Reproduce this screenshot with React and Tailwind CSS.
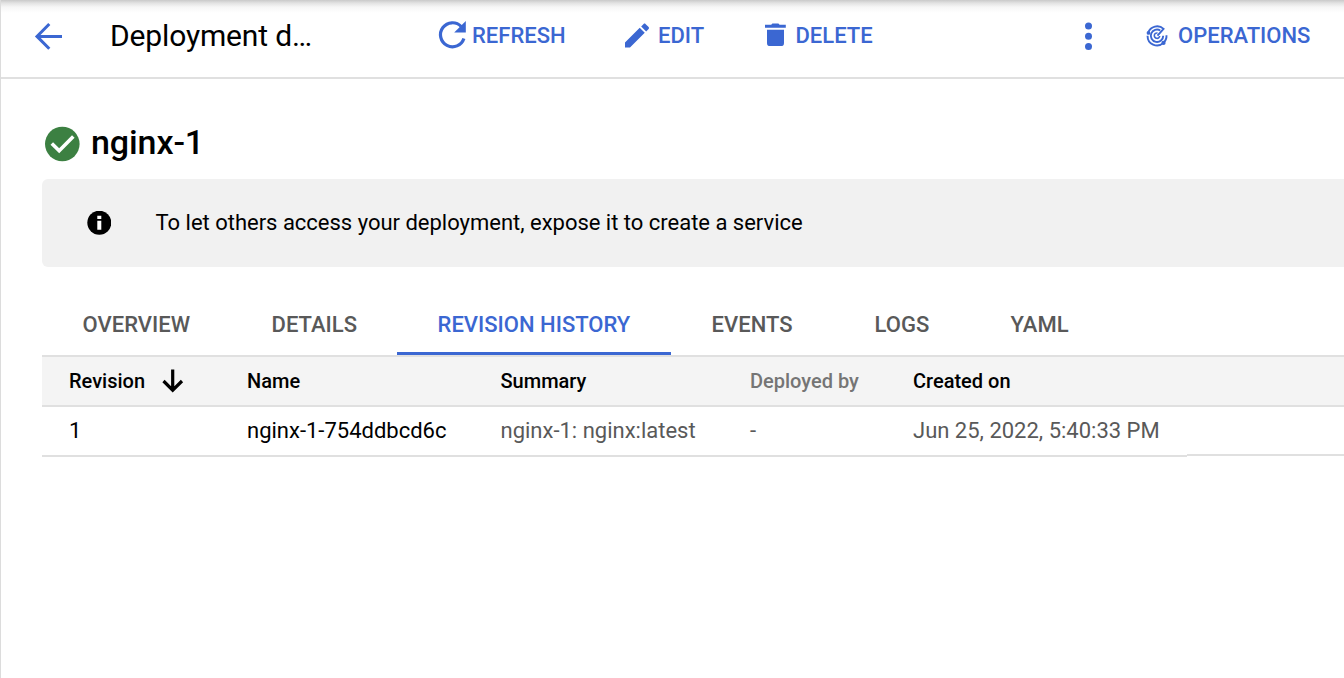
import React from "react";

const tabs = [
  { label: "OVERVIEW", w: "w-[189px]" },
  { label: "DETAILS", w: "w-[166px]" },
  { label: "REVISION HISTORY", w: "w-[274px]", active: true },
  { label: "EVENTS", w: "w-[163px]" },
  { label: "LOGS", w: "w-[136px]" },
  { label: "YAML", w: "w-[139px]" },
];

function BackIcon() {
  return (
    <svg className="ml-[32px] mt-[20px] h-8 w-8 shrink-0" viewBox="0 0 32 32" fill="none" stroke="#3b67d2" strokeWidth="3">
      <path d="M29 16.400H4M16.300 4L4 16.400L16.300 28.800" />
    </svg>
  );
}

function RefreshIcon() {
  return (
    <svg className="h-8 w-8 shrink-0" viewBox="0 1 32 32">
      <path d="M25.200 7.500A12 12 0 1 0 27.900 19.500" fill="none" stroke="#3b67d2" strokeWidth="3.200" />
      <path d="M29.800 2V13.600H18.200Z" fill="#3b67d2" />
    </svg>
  );
}

function EditIcon() {
  return (
    <svg className="h-8 w-8 shrink-0" viewBox="0 0.3 24 24" fill="#3b67d2">
      <path d="M3 17.25V21h3.75L17.81 9.94l-3.75-3.75L3 17.25zM20.71 7.04c.39-.39.39-1.02 0-1.41l-2.34-2.34c-.39-.39-1.02-.39-1.41 0l-1.83 1.83 3.75 3.75 1.83-1.83z" />
    </svg>
  );
}

function DeleteIcon() {
  return (
    <svg className="h-8 w-8 shrink-0" viewBox="0 0.5 32 32" fill="#3b67d2">
      <path d="M6 5.300h6.200l1.200-1.200h6l1.200 1.200h6.200v2.900H6zM8 10.200h17v13.200a3.200 3.200 0 0 1-3.200 3.200H11.200A3.200 3.200 0 0 1 8 23.400z" />
    </svg>
  );
}

function OperationsIcon() {
  return (
    <svg className="h-6 w-6 shrink-0" viewBox="0 0.3 24 24" fill="none" stroke="#3b67d2" strokeWidth="1.9">
      <path d="M3.200 9A9.400 9.400 0 0 1 18.600 5.200L12.500 12" />
      <path d="M2.600 12A9.400 9.400 0 0 0 18.400 19.200" />
      <path d="M15.300 6.800A6.200 6.200 0 1 0 18.200 12" />
      <path d="M21.500 11.500A9.600 9.600 0 0 1 18.500 19" />
      <path d="M12.500 9.300A2.700 2.700 0 1 0 14.700 12.300" strokeWidth="1.600" />
      <circle cx="3.500" cy="9.200" r="1.900" fill="#3b67d2" stroke="none" />
      <circle cx="18.500" cy="19.200" r="2.100" fill="#3b67d2" stroke="none" />
    </svg>
  );
}

function Toolbar() {
  return (
    <header className="flex h-[79px] shrink-0 items-start border-b-2 border-[#e0e0e0] bg-[linear-gradient(#c9c9c9_0px,#e2e2e2_3px,#f6f6f6_7px,#ffffff_13px)] text-[22px] font-medium leading-[30px] text-[#3b67d2]">
      <BackIcon />
      <h1 className="ml-[45px] mt-[16px] w-[326px] whitespace-nowrap text-[30px] font-normal leading-10 tracking-[-0.15px] text-black">Deployment d…</h1>
      <button className="mt-[20px] flex w-[185px] items-center"><RefreshIcon /><span className="ml-[4px]">REFRESH</span></button>
      <button className="mt-[20px] flex w-[138px] items-center"><EditIcon /><span className="ml-[5px]">EDIT</span></button>
      <button className="mt-[20px] flex w-[325px] items-center"><DeleteIcon /><span className="ml-[4.500px]">DELETE</span></button>
      <svg className="mt-[20px] h-8 w-2 shrink-0" viewBox="-0.5 0 8 32" fill="#3b67d2">
        <circle cx="4" cy="6" r="3.500" /><circle cx="4" cy="16.200" r="3.500" /><circle cx="4" cy="26.400" r="3.500" />
      </svg>
      <button className="ml-[53px] mt-[21px] flex items-center"><OperationsIcon /><span className="ml-[9px]">OPERATIONS</span></button>
    </header>
  );
}

function StatusTitle() {
  return (
    <div className="flex h-[100px] shrink-0 items-start pl-[44px] pt-[47px]">
      <svg className="h-9 w-9" viewBox="0 0 36 36">
        <circle cx="17.300" cy="18" r="17.300" fill="#3c8042" />
        <path d="M6.800 17.400L14.200 24.800L28.300 10.600" fill="none" stroke="white" strokeWidth="3.600" />
      </svg>
      <h2 className="-mt-[6px] ml-[10px] text-[34px] font-medium leading-[44px] tracking-[-0.1px] text-black">nginx-1</h2>
    </div>
  );
}

function Notice() {
  return (
    <div className="ml-[41px] flex h-[88px] shrink-0 items-center rounded-l-[6px] bg-[#f1f1f1] pl-[45px]">
      <svg className="h-6 w-6" viewBox="-0.3 0.3 24 24">
        <circle cx="12" cy="12" r="12" fill="black" />
        <path d="M10 5h4v3.200h-4zM10 10h4v9h-4z" fill="white" />
      </svg>
      <p className="-mt-px ml-[44.500px] text-[22px] leading-[30px] tracking-[-0.01px] text-black">To let others access your deployment, expose it to create a service</p>
    </div>
  );
}

export default function App() {
  return (
    <main className="flex h-[678px] w-[1344px] flex-col overflow-hidden border-l border-[#dcdcdc] bg-white font-['Roboto',sans-serif]">
      <Toolbar />
      <StatusTitle />
      <Notice />
      <nav className="ml-[41px] mt-[29px] flex h-[59px] shrink-0 text-[22px] font-medium leading-[57px] text-[#595959]">
        {tabs.map((t) => (
          <div key={t.label} className={`${t.w} shrink-0 pl-[40.6px] ${t.active ? "border-b-3 border-[#3b67d2] text-[#3b67d2]" : ""} `}>{t.label}</div>
        ))}
      </nav>
      <section className="ml-[41px]">
        <div className="grid h-[52px] grid-cols-[178px_253px_250px_163px_1fr] items-center border-y-2 border-[#e0e0e0] bg-[#f4f4f4] pl-[27px] text-[20px] font-medium text-black">
          <div className="flex items-center">
            <span>Revision</span>
            <svg className="ml-[17px] h-6 w-[22px]" viewBox="0 0 22 24" fill="none" stroke="black" strokeWidth="3.200">
              <path d="M10.700 0.500V21M1.500 12L10.700 21.200L20 12" />
            </svg>
          </div>
          <span>Name</span><span className="pl-[0.5px]">Summary</span><span className="text-[#757575]">Deployed by</span><span>Created on</span>
        </div>
        <div className="flex text-[22px] leading-[48px] text-[#595959]">
          <div className="grid h-[50px] w-[1145px] shrink-0 grid-cols-[178px_253px_250px_163px_1fr] border-b-2 border-[#e0e0e0] pl-[27px]">
            <span className="text-black">1</span><span className="text-black">nginx-1-754ddbcd6c</span><span className="pl-[0.5px]">nginx-1: nginx:latest</span><span>-</span><span>Jun 25, 2022, 5:40:33 PM</span>
          </div>
          <div className="h-[49px] flex-1 border-b-2 border-[#e0e0e0]" />
        </div>
      </section>
    </main>
  );
}
